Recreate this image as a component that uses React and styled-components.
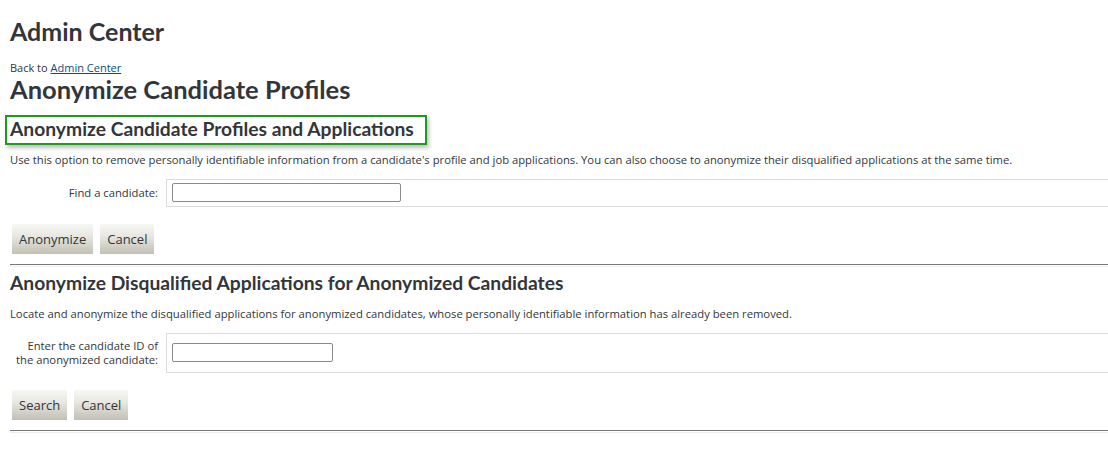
import React from "react";
import styled, { createGlobalStyle } from "styled-components";

const Global = createGlobalStyle`
  body {
    margin: 0;
    background: #fff;
    font-family: "Open Sans", "Noto Sans", Arial, sans-serif;
    color: #32363a;
  }
`;

const Page = styled.div`
  padding: 0 0 0 10px;
`;

const Title = styled.h1`
  font-family: Lato, "Open Sans", Arial, sans-serif;
  font-size: 25px;
  font-weight: 700;
  margin: 0;
  padding-top: 16px;
  line-height: 30px;
  color: #32363a;
`;

const Back = styled.div`
  font-size: 11px;
  margin-top: 15px;
  line-height: 13px;
  a {
    color: #0a4f7a;
    text-decoration: underline;
  }
`;

const PageTitle = styled.h2`
  font-family: Lato, "Open Sans", Arial, sans-serif;
  font-size: 25.5px;
  font-weight: 700;
  margin: 0;
  line-height: 30px;
  color: #32363a;
`;

const SectionTitle = styled.h3`
  font-family: Lato, "Open Sans", Arial, sans-serif;
  font-size: 19.25px;
  font-weight: 700;
  margin: 0;
  line-height: 24px;
  color: #32363a;
  display: inline-block;
  ${(p) =>
    p.$focused &&
    `
    margin-left: -5px;
    margin-bottom: -4px;
    padding: 0 11px 2px 3px;
    border: 2px solid #1f9a1f;
    box-shadow: 2px 3px 4px rgba(0,0,0,0.25);
  `}
`;

const Desc = styled.p`
  font-size: 11.25px;
  line-height: 14px;
  margin: 12px 0 12px;
  color: #32363a;
`;

const FormRow = styled.div`
  display: grid;
  grid-template-columns: 156px 1fr;
  align-items: stretch;
`;

const Label = styled.div`
  font-size: 11.25px;
  line-height: 14px;
  text-align: right;
  padding-right: 8px;
  display: flex;
  align-items: center;
  justify-content: flex-end;
  color: #32363a;
`;

const Field = styled.div`
  border: 1px solid #dcdcdc;
  border-right: none;
  padding: ${(p) => p.$pad};
  display: flex;
  align-items: center;
`;

const Input = styled.input`
  width: ${(p) => p.$w}px;
  height: 19px;
  box-sizing: border-box;
  border: 1px solid #8a8a8a;
  border-radius: 2px;
  margin: 0 0 0 5px;
  padding: 0 3px;
  font-size: 11px;
`;

const Buttons = styled.div`
  display: flex;
  gap: 7px;
  margin: 17px 0 10px 2px;
`;

const Button = styled.button`
  height: 30px;
  padding: 0 7px;
  border: none;
  background: linear-gradient(to bottom, #f7f7f4 0%, #e8e7e1 40%, #c2c0b4 100%);
  font-family: "Open Sans", "Noto Sans", Arial, sans-serif;
  font-size: 13px;
  color: #32363a;
  cursor: pointer;
`;

const Rule = styled.div`
  height: 1px;
  border-top: 1px solid #777;
  border-bottom: 1px solid #eee;
`;

const Section = styled.section`
  padding-top: ${(p) => p.$top}px;
`;

export default function App() {
  return (
    <>
      <Global />
      <Page>
        <Title>Admin Center</Title>
        <Back>
          Back to <a href="#">Admin Center</a>
        </Back>
        <PageTitle>Anonymize Candidate Profiles</PageTitle>

        <Section $top={11}>
          <SectionTitle $focused>Anonymize Candidate Profiles and Applications</SectionTitle>
          <Desc>
            Use this option to remove personally identifiable information from a candidate's profile and job
            applications. You can also choose to anonymize their disqualified applications at the same time.
          </Desc>
          <FormRow>
            <Label>Find a candidate:</Label>
            <Field $pad="3px 0 4px 0">
              <Input $w={229} />
            </Field>
          </FormRow>
          <Buttons>
            <Button>Anonymize</Button>
            <Button>Cancel</Button>
          </Buttons>
          <Rule />
        </Section>

        <Section $top={4}>
          <SectionTitle>Anonymize Disqualified Applications for Anonymized Candidates</SectionTitle>
          <Desc>
            Locate and anonymize the disqualified applications for anonymized candidates, whose personally
            identifiable information has already been removed.
          </Desc>
          <FormRow>
            <Label>
              Enter the candidate ID of
              <br />
              the anonymized candidate:
            </Label>
            <Field $pad="9px 0 10px">
              <Input $w={161} />
            </Field>
          </FormRow>
          <Buttons>
            <Button>Search</Button>
            <Button>Cancel</Button>
          </Buttons>
          <Rule />
        </Section>
      </Page>
    </>
  );
}
